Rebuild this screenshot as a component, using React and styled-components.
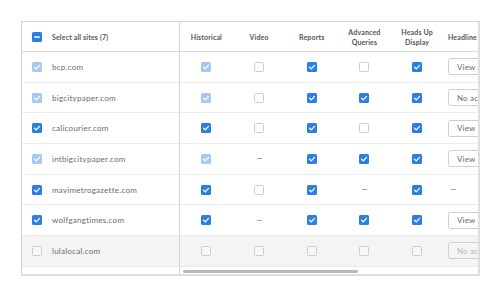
import React from "react";
import styled, { createGlobalStyle, css } from "styled-components";

const GlobalStyle = createGlobalStyle`
  html, body { margin: 0; padding: 0; background: #ffffff; }
  body { font-family: Lato, "Liberation Sans", Arial, sans-serif; }
  * { box-sizing: border-box; }
`;

const ROW_H = 30.7;
const COL_W = 52.7;

const Page = styled.div`
  width: 500px;
  height: 295px;
  padding: 21px 21px 0 21px;
`;

const Frame = styled.div`
  display: flex;
  width: 459px;
  border: 1px solid #d6d6d6;
  border-right-width: 2px;
  border-bottom-width: 2px;
  border-bottom-color: #dedede;
  border-right-color: #dedede;
  background: #fff;
`;

const SiteColumn = styled.div`
  width: 158px;
  flex: none;
  display: flex;
  flex-direction: column;
  border-right: 1px solid #d6d6d6;
`;

const ScrollPane = styled.div`
  flex: 1;
  min-width: 0;
  display: flex;
  flex-direction: column;
`;

const Viewport = styled.div`
  overflow: hidden;
`;

const Content = styled.div`
  width: 520px;
`;

const HeaderRow = styled.div`
  display: flex;
  align-items: center;
  height: 30px;
  border-bottom: 1px solid #dadada;
  ${(p) =>
    p.$site &&
    css`
      padding-left: 10px;
      gap: 10px;
    `}
`;

const Row = styled.div`
  display: flex;
  align-items: center;
  height: ${ROW_H}px;
  border-bottom: 1px solid #ececec;
  background: ${(p) => (p.$muted ? "#f4f4f4" : "#ffffff")};
  ${(p) =>
    p.$site &&
    css`
      padding-left: 10px;
      gap: 10px;
    `}
`;

const ScrollSpacer = styled.div`
  height: 7px;
`;

const Track = styled.div`
  height: 7px;
  padding: 3px 0 0 3px;
`;

const Thumb = styled.div`
  width: 175px;
  height: 3.5px;
  border-radius: 2px;
  background: #b9b9b9;
`;

const HeadText = styled.span`
  font-size: 7px;
  font-weight: 700;
  color: #555555;
  line-height: 10px;
  letter-spacing: 0.15px;
`;

const ColHead = styled.div`
  width: ${COL_W}px;
  flex: none;
  text-align: center;
  font-size: 7px;
  font-weight: 700;
  color: #555555;
  line-height: 10px;
  letter-spacing: 0.15px;
  ${(p) =>
    p.$left &&
    css`
      width: 260px;
      text-align: left;
      padding-left: 4.5px;
    `}
`;

const SiteName = styled.span`
  font-size: 8px;
  color: #6a6a6a;
  letter-spacing: 0.25px;
`;

const Cell = styled.div`
  width: ${COL_W}px;
  flex: none;
  display: flex;
  justify-content: center;
  align-items: center;
`;

const HeadlineCell = styled.div`
  width: 260px;
  flex: none;
  display: flex;
  align-items: center;
  padding-left: 4.5px;
`;

const Box = styled.span`
  display: inline-flex;
  align-items: center;
  justify-content: center;
  width: 10px;
  height: 10px;
  border-radius: 1.5px;
  flex: none;
  ${(p) =>
    p.$state === "on" &&
    css`
      background: #2b7fe3;
    `}
  ${(p) =>
    p.$state === "light" &&
    css`
      background: #a5c9f3;
    `}
  ${(p) =>
    p.$state === "off" &&
    css`
      background: ${p.$muted ? "#f8f8f8" : "#ffffff"};
      border: 1px solid #cdcdcd;
    `}
`;

const Dash = styled.span`
  display: inline-block;
  width: 5px;
  height: 1px;
  background: #a8a8a8;
  ${(p) =>
    p.$left &&
    css`
      margin-left: 3px;
    `}
`;

const Button = styled.button`
  height: 17px;
  width: 64px;
  flex: none;
  border: 1px solid #cfcfcf;
  border-radius: 2.5px;
  background: ${(p) => (p.$muted ? "#f4f4f4" : "#ffffff")};
  color: ${(p) => (p.$muted ? "#b8b8b8" : "#6a6a6a")};
  font-family: Lato, "Liberation Sans", Arial, sans-serif;
  font-size: 8px;
  text-align: left;
  padding: 0 0 0 8px;
  white-space: nowrap;
  letter-spacing: 0.2px;
`;

const CheckIcon = () => (
  <svg width="10" height="10" viewBox="0 0 10 10">
    <path
      d="M2.6 5.3 L4.3 6.9 L7.5 3.4"
      fill="none"
      stroke="#ffffff"
      strokeWidth="1.3"
      strokeLinecap="round"
      strokeLinejoin="round"
    />
  </svg>
);

const MinusIcon = () => (
  <svg width="10" height="10" viewBox="0 0 10 10">
    <rect x="2.2" y="4.3" width="5.6" height="1.5" fill="#ffffff" />
  </svg>
);

const Check = ({ state, muted }) => (
  <Box $state={state} $muted={muted}>
    {(state === "on" || state === "light") && <CheckIcon />}
  </Box>
);

const columns = [
  ["Historical"],
  ["Video"],
  ["Reports"],
  ["Advanced", "Queries"],
  ["Heads Up", "Display"],
];

const sites = [
  { name: "bcp.com", sel: "light", cells: ["light", "off", "on", "off", "on"], headline: "View all sites" },
  { name: "bigcitypaper.com", sel: "light", cells: ["light", "off", "on", "on", "on"], headline: "No access" },
  { name: "calicourier.com", sel: "on", cells: ["on", "off", "on", "off", "on"], headline: "View Dashboard" },
  { name: "intbigcitypaper.com", sel: "light", cells: ["light", "dash", "on", "on", "on"], headline: "View Dashboard" },
  { name: "mavimetrogazette.com", sel: "on", cells: ["on", "off", "on", "dash", "on"], headline: null },
  { name: "wolfgangtimes.com", sel: "on", cells: ["on", "dash", "on", "on", "on"], headline: "View all sites" },
  { name: "lulalocal.com", sel: "off", cells: ["off", "off", "off", "off", "off"], headline: "No access", muted: true },
];

export default function App() {
  return (
    <>
      <GlobalStyle />
      <Page>
        <Frame>
          <SiteColumn>
            <HeaderRow $site>
              <Box $state="on">
                <MinusIcon />
              </Box>
              <HeadText>Select all sites (7)</HeadText>
            </HeaderRow>
            {sites.map((s) => (
              <Row key={s.name} $site $muted={s.muted}>
                <Check state={s.sel} muted={s.muted} />
                <SiteName>{s.name}</SiteName>
              </Row>
            ))}
            <ScrollSpacer />
          </SiteColumn>
          <ScrollPane>
            <Viewport>
              <Content>
                <HeaderRow>
                  {columns.map((lines) => (
                    <ColHead key={lines[0]}>
                      {lines.map((l) => (
                        <div key={l}>{l}</div>
                      ))}
                    </ColHead>
                  ))}
                  <ColHead $left>Headline</ColHead>
                </HeaderRow>
                {sites.map((s) => (
                  <Row key={s.name} $muted={s.muted}>
                    {s.cells.map((c, i) => (
                      <Cell key={i}>
                        {c === "dash" ? <Dash /> : <Check state={c} muted={s.muted} />}
                      </Cell>
                    ))}
                    <HeadlineCell>
                      {s.headline ? (
                        <Button $muted={s.muted}>{s.headline}</Button>
                      ) : (
                        <Dash $left />
                      )}
                    </HeadlineCell>
                  </Row>
                ))}
              </Content>
            </Viewport>
            <Track>
              <Thumb />
            </Track>
          </ScrollPane>
        </Frame>
      </Page>
    </>
  );
}
